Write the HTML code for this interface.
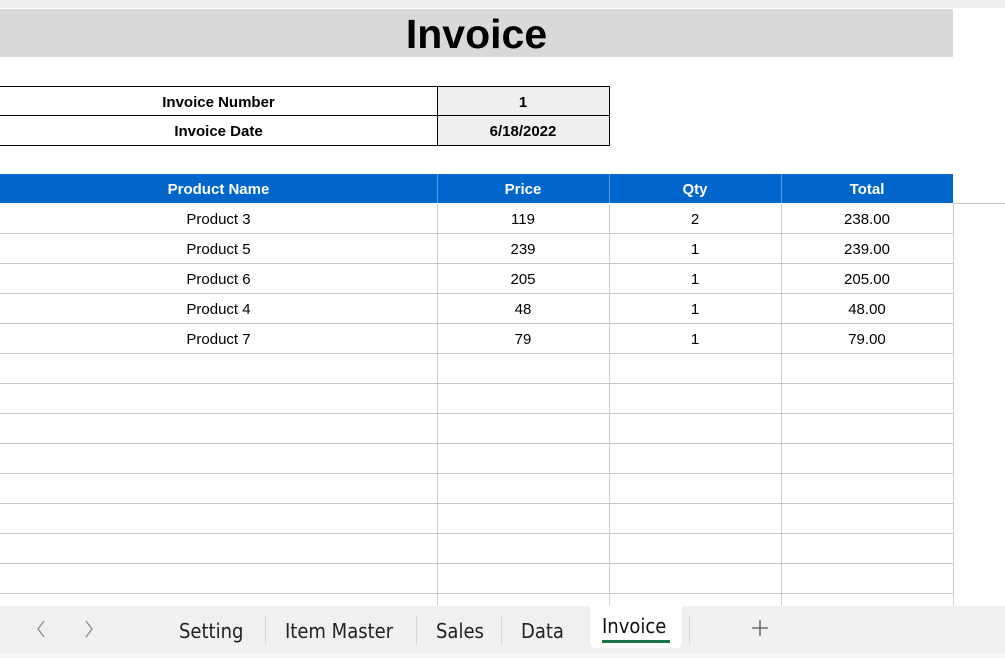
<!DOCTYPE html>
<html><head><style>
body{margin:0;width:1005px;height:658px;overflow:hidden;background:#fff;font-family:"Liberation Sans",sans-serif;position:relative}
.a{position:absolute}
.t{position:absolute;text-align:center;font-size:15px;color:#000;padding-top:2px}
.hl{position:absolute;height:1px;background:#c6c6c6}
.vl{position:absolute;width:1px;background:#d0d0d0}
.tab{position:absolute;top:619px;font-size:20px;color:#222;font-family:"DejaVu Sans Condensed","Liberation Sans Narrow","Liberation Sans",sans-serif}
.sep{position:absolute;top:616px;width:1px;height:28px;background:#d6d6d6}
</style></head><body>
<div class="a" style="left:0;top:0;width:1005px;height:8px;background:#efefef"></div>
<div class="a" style="left:0;top:9px;width:953px;height:48px;background:#d9d9d9"></div>
<div class="t" style="left:0;top:9px;width:953px;height:48px;line-height:50px;font-size:41px;font-weight:bold;padding-top:0">Invoice</div>

<div class="a" style="left:0;top:86px;width:609px;height:58px;border-top:1px solid #000;border-bottom:1px solid #000"></div>
<div class="a" style="left:437px;top:86px;width:171px;height:58px;background:#efefef;border:1px solid #000;border-right:1px solid #000"></div>
<div class="a" style="left:0;top:115px;width:609px;height:1px;background:#000"></div>
<div class="t" style="left:0;top:87px;width:437px;line-height:28px;font-weight:bold">Invoice Number</div>
<div class="t" style="left:437px;top:87px;width:172px;line-height:28px;font-weight:bold">1</div>
<div class="t" style="left:0;top:116px;width:437px;line-height:28px;font-weight:bold">Invoice Date</div>
<div class="t" style="left:437px;top:116px;width:172px;line-height:28px;font-weight:bold">6/18/2022</div>

<div class="a" style="left:0;top:174px;width:953px;height:29px;background:#0066cc"></div>
<div class="a" style="left:437px;top:174px;width:1px;height:29px;background:#5c9ae0"></div>
<div class="a" style="left:609px;top:174px;width:1px;height:29px;background:#5c9ae0"></div>
<div class="a" style="left:781px;top:174px;width:1px;height:29px;background:#5c9ae0"></div>
<div class="t" style="left:0;top:174px;width:437px;line-height:28px;color:#fff;font-weight:bold">Product Name</div>
<div class="t" style="left:437px;top:174px;width:172px;line-height:28px;color:#fff;font-weight:bold">Price</div>
<div class="t" style="left:609px;top:174px;width:172px;line-height:28px;color:#fff;font-weight:bold">Qty</div>
<div class="t" style="left:781px;top:174px;width:172px;line-height:28px;color:#fff;font-weight:bold">Total</div>
<div class="hl" style="left:953px;top:203px;width:52px"></div>

<div class="vl" style="left:437px;top:204px;height:402px"></div>
<div class="vl" style="left:609px;top:204px;height:402px"></div>
<div class="vl" style="left:781px;top:204px;height:402px"></div>
<div class="vl" style="left:953px;top:204px;height:402px"></div>
<div class="hl" style="left:0;top:233px;width:953px"></div>
<div class="hl" style="left:0;top:263px;width:953px"></div>
<div class="hl" style="left:0;top:293px;width:953px"></div>
<div class="hl" style="left:0;top:323px;width:953px"></div>
<div class="hl" style="left:0;top:353px;width:953px"></div>
<div class="hl" style="left:0;top:383px;width:953px"></div>
<div class="hl" style="left:0;top:413px;width:953px"></div>
<div class="hl" style="left:0;top:443px;width:953px"></div>
<div class="hl" style="left:0;top:473px;width:953px"></div>
<div class="hl" style="left:0;top:503px;width:953px"></div>
<div class="hl" style="left:0;top:533px;width:953px"></div>
<div class="hl" style="left:0;top:563px;width:953px"></div>
<div class="hl" style="left:0;top:593px;width:953px"></div>

<div class="t" style="left:0;top:204px;width:437px;line-height:28px">Product 3</div>
<div class="t" style="left:437px;top:204px;width:172px;line-height:28px">119</div>
<div class="t" style="left:609px;top:204px;width:172px;line-height:28px">2</div>
<div class="t" style="left:781px;top:204px;width:172px;line-height:28px">238.00</div>
<div class="t" style="left:0;top:234px;width:437px;line-height:28px">Product 5</div>
<div class="t" style="left:437px;top:234px;width:172px;line-height:28px">239</div>
<div class="t" style="left:609px;top:234px;width:172px;line-height:28px">1</div>
<div class="t" style="left:781px;top:234px;width:172px;line-height:28px">239.00</div>
<div class="t" style="left:0;top:264px;width:437px;line-height:28px">Product 6</div>
<div class="t" style="left:437px;top:264px;width:172px;line-height:28px">205</div>
<div class="t" style="left:609px;top:264px;width:172px;line-height:28px">1</div>
<div class="t" style="left:781px;top:264px;width:172px;line-height:28px">205.00</div>
<div class="t" style="left:0;top:294px;width:437px;line-height:28px">Product 4</div>
<div class="t" style="left:437px;top:294px;width:172px;line-height:28px">48</div>
<div class="t" style="left:609px;top:294px;width:172px;line-height:28px">1</div>
<div class="t" style="left:781px;top:294px;width:172px;line-height:28px">48.00</div>
<div class="t" style="left:0;top:324px;width:437px;line-height:28px">Product 7</div>
<div class="t" style="left:437px;top:324px;width:172px;line-height:28px">79</div>
<div class="t" style="left:609px;top:324px;width:172px;line-height:28px">1</div>
<div class="t" style="left:781px;top:324px;width:172px;line-height:28px">79.00</div>

<div class="a" style="left:0;top:606px;width:1005px;height:52px;background:#f0f0f0"></div>
<div class="a" style="left:0;top:653px;width:1005px;height:5px;background:#f7f7f7"></div>
<svg class="a" style="left:32px;top:619px" width="70" height="20"><path d="M12 2 L6 10 L12 18" fill="none" stroke="#888" stroke-width="1.3"/><path d="M54 2 L60 10 L54 18" fill="none" stroke="#888" stroke-width="1.3"/></svg>
<div class="tab" style="left:179px">Setting</div>
<div class="sep" style="left:265px"></div>
<div class="tab" style="left:285px">Item Master</div>
<div class="sep" style="left:416px"></div>
<div class="tab" style="left:436px">Sales</div>
<div class="sep" style="left:501px"></div>
<div class="tab" style="left:521px">Data</div>
<div class="a" style="left:590px;top:606px;width:92px;height:42px;background:#fff;border-radius:0 0 6px 6px"></div>
<div class="tab" style="left:602px;top:614px;color:#111">Invoice</div>
<div class="a" style="left:602px;top:640px;width:68px;height:3px;background:#1e7145"></div>
<div class="sep" style="left:689px"></div>
<svg class="a" style="left:750px;top:618px" width="20" height="20"><path d="M10 2V18M2 10H18" stroke="#555" stroke-width="1.3"/></svg>
</body></html>
